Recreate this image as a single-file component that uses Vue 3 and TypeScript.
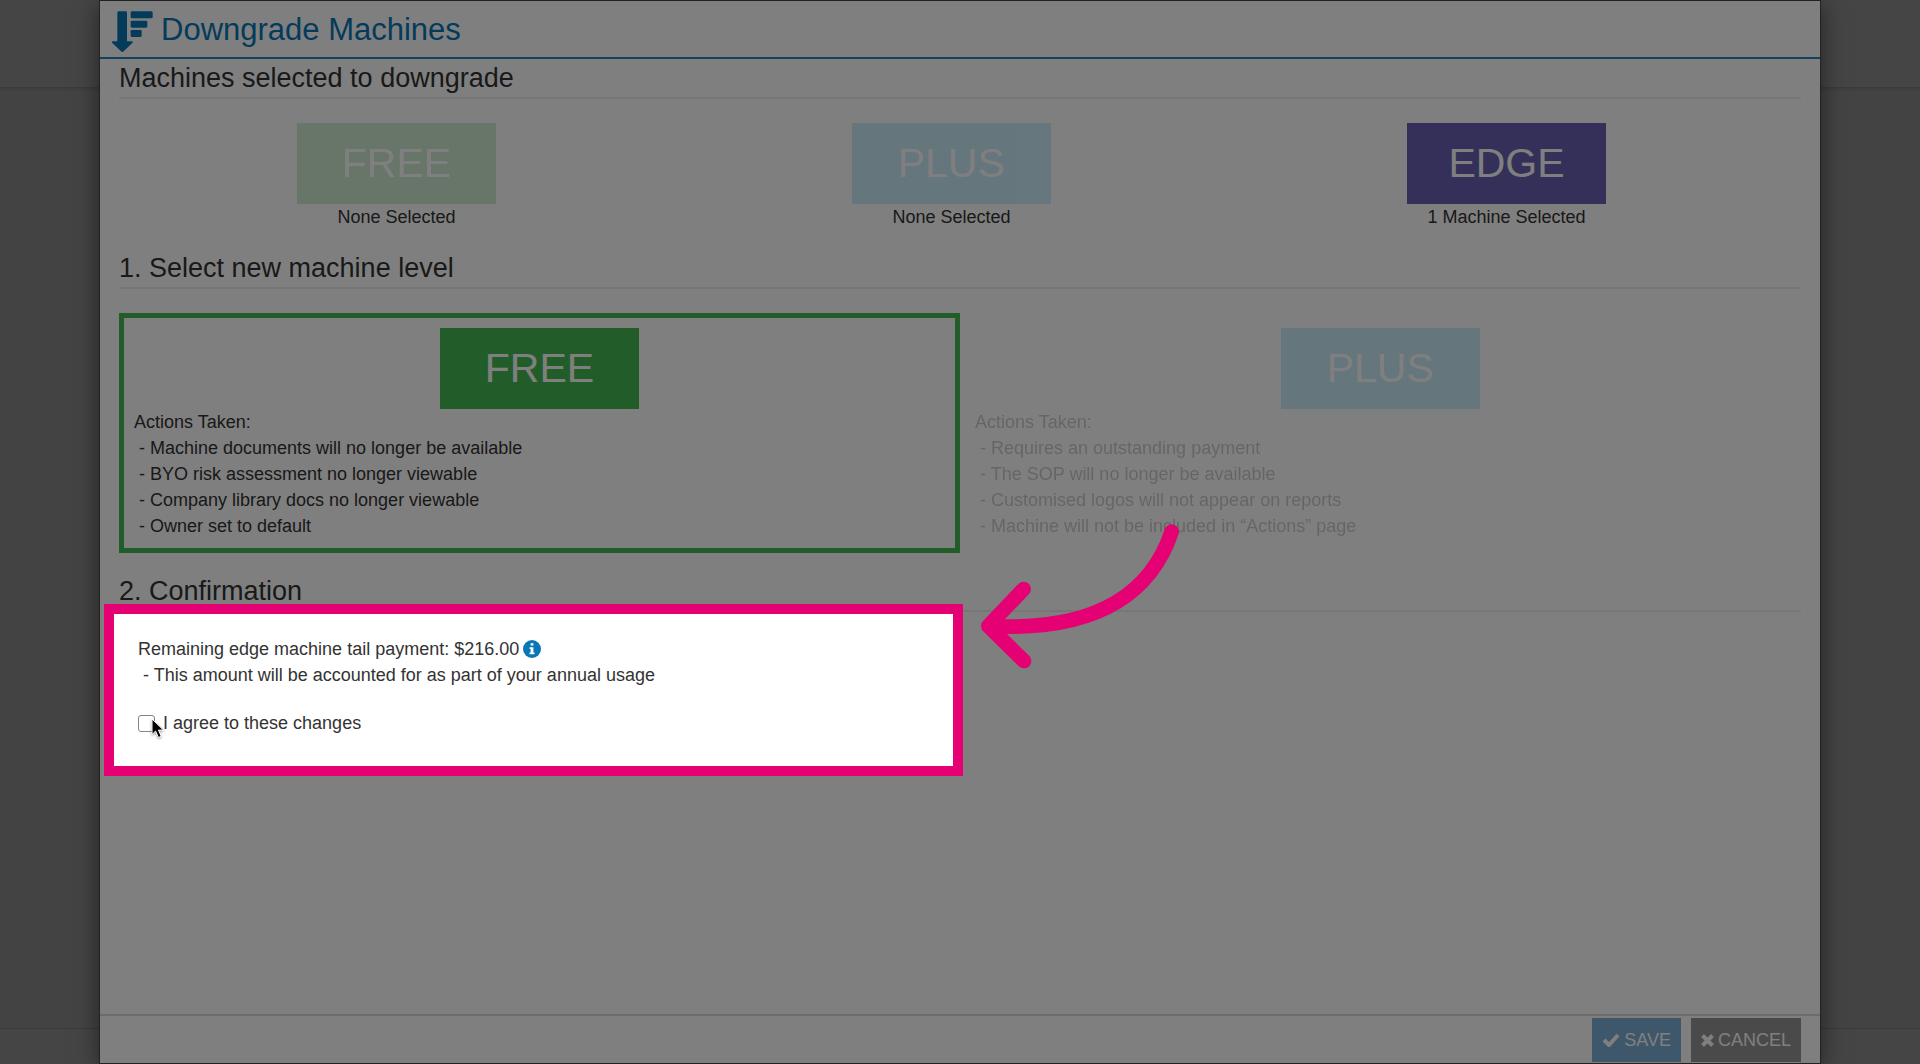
<script setup lang="ts">
import { ref } from 'vue'

interface Tier {
  name: string
  kind: 'free' | 'plus' | 'edge'
  faded: boolean
  label: string
}

interface Level {
  name: string
  kind: 'free' | 'plus'
  available: boolean
  actions: string[]
}

const tiers: Tier[] = [
  { name: 'FREE', kind: 'free', faded: true, label: 'None Selected' },
  { name: 'PLUS', kind: 'plus', faded: true, label: 'None Selected' },
  { name: 'EDGE', kind: 'edge', faded: false, label: '1 Machine Selected' },
]

const levels: Level[] = [
  {
    name: 'FREE',
    kind: 'free',
    available: true,
    actions: [
      'Machine documents will no longer be available',
      'BYO risk assessment no longer viewable',
      'Company library docs no longer viewable',
      'Owner set to default',
    ],
  },
  {
    name: 'PLUS',
    kind: 'plus',
    available: false,
    actions: [
      'Requires an outstanding payment',
      'The SOP will no longer be available',
      'Customised logos will not appear on reports',
      'Machine will not be included in “Actions” page',
    ],
  },
]

const selected = ref('FREE')
const agreed = ref(false)

function choose(level: Level) {
  if (level.available) selected.value = level.name
}
</script>

<template>
  <div class="page">
    <div class="page-top"></div>
    <div class="page-bottom"></div>

    <div class="modal" role="dialog" aria-labelledby="dialog-title">
      <header class="modal-header">
        <svg class="title-icon" viewBox="0 0 123 126" aria-hidden="true">
          <path d="M20 1h21a4 4 0 0 1 4 4v86h14q6 0 2 5L35 121q-4 4-8 0L1 96q-4-5 2-5h13V5a4 4 0 0 1 4-4z" />
          <rect x="56" y="1" width="66" height="21" rx="4" />
          <rect x="56" y="29" width="50" height="21" rx="4" />
          <rect x="56" y="57" width="33" height="21" rx="4" />
        </svg>
        <h1 id="dialog-title">Downgrade Machines</h1>
      </header>

      <main class="modal-body">
        <section>
          <h2>Machines selected to downgrade</h2>
          <div class="tiers">
            <div v-for="tier in tiers" :key="tier.name" class="tier">
              <div class="badge" :class="[tier.kind, { faded: tier.faded }]">{{ tier.name }}</div>
              <div>{{ tier.label }}</div>
            </div>
          </div>
        </section>

        <section>
          <h2>1. Select new machine level</h2>
          <div class="levels">
            <button
              v-for="level in levels"
              :key="level.name"
              type="button"
              class="level"
              :class="{ selected: selected === level.name, faded: !level.available }"
              :disabled="!level.available"
              @click="choose(level)"
            >
              <span class="badge" :class="level.kind">{{ level.name }}</span>
              <span class="line">Actions Taken:</span>
              <span v-for="action in level.actions" :key="action" class="line item">- {{ action }}</span>
            </button>
          </div>
        </section>

        <section class="confirmation">
          <h2>2. Confirmation</h2>
          <div class="payment">
            <div class="amount">
              <span>Remaining edge machine tail payment: $216.00</span>
              <svg class="info" viewBox="0 0 18 18" aria-hidden="true">
                <circle cx="9" cy="9" r="9" fill="#0977b5" />
                <path fill="#fff" d="M7.6 3.2h2.8v2.4H7.6zM6.6 7.2h3.8v5.2h1.1v1.9H6.5v-1.900h1.1V9.1h-1z" />
              </svg>
            </div>
            <div class="item">- This amount will be accounted for as part of your annual usage</div>
            <label class="agree">
              <input v-model="agreed" type="checkbox" />
              <span>I agree to these changes</span>
              <svg class="cursor" viewBox="0 0 14 21" aria-hidden="true">
                <path
                  d="M1 1v15.500l3.600-3.400 2.800 6.400 2.800-1.200-2.700-6.200h5z"
                  fill="#000"
                  stroke="#fff"
                  stroke-width="1"
                />
              </svg>
            </label>
          </div>

          <div class="spotlight"></div>
          <svg class="arrow" viewBox="180 72 600 438" aria-hidden="true">
            <path d="M755 95C700 260 555 398 205 378M311 267L205 378L312 483" />
          </svg>
        </section>
      </main>

      <footer class="modal-footer">
        <button type="button" class="action save">
          <svg width="18" height="14" viewBox="0 0 18 14" aria-hidden="true">
            <path d="M2 7l5 5L16 2" fill="none" stroke="currentColor" stroke-width="4" />
          </svg>
          SAVE
        </button>
        <button type="button" class="action cancel">
          <svg width="13" height="13" viewBox="0 0 13 13" aria-hidden="true">
            <path d="M1.500 1.500l10 10M11.500 1.500l-10 10" fill="none" stroke="currentColor" stroke-width="4" />
          </svg>
          CANCEL
        </button>
      </footer>
    </div>
  </div>
</template>

<style>
body {
  margin: 0;
}
</style>

<style scoped>
.page {
  position: relative;
  overflow: hidden;
  min-height: 100vh;
  background: #878787;
  color: #333;
  font: 18px/26px "Liberation Sans", Arial, sans-serif;
}

.page *,
.page {
  box-sizing: border-box;
}

.page-top {
  position: absolute;
  inset: 0 0 auto;
  height: 87px;
  background: #8a8a8a;
  box-shadow: 0 1px 4px rgba(0, 0, 0, 0.2);
}

.page-bottom {
  position: absolute;
  inset: auto 0 0;
  height: 36px;
  border-top: 1px solid #747474;
  background: #8a8a8a;
}

.modal {
  position: relative;
  display: flex;
  flex-direction: column;
  min-height: 100vh;
  margin: 0 99px;
  border: 1px solid #444;
  background: #fff;
  box-shadow: 0 5px 22px rgba(0, 0, 0, 0.5);
}

.modal-header {
  display: flex;
  gap: 8px;
  padding: 10px 12px 4px;
  border-bottom: 2px solid #1f86bd;
  color: #0977b5;
}

.title-icon {
  width: 41px;
  height: 42px;
  fill: currentColor;
}

h1 {
  margin: 0;
  font-size: 31px;
  font-weight: 400;
  line-height: 38px;
}

.modal-body {
  flex: 1;
  display: flex;
  flex-direction: column;
  gap: 23px;
  padding: 4px 19px;
}

h2 {
  margin: 0 0 24px;
  padding-bottom: 4px;
  border-bottom: 2px solid #eee;
  font-size: 27px;
  font-weight: 400;
  line-height: 30px;
}

.tiers {
  display: flex;
  padding-right: 17px;
}

.tier {
  flex: 1;
  text-align: center;
}

.badge {
  display: block;
  width: 199px;
  margin: 0 auto;
  color: #fff;
  font-size: 41px;
  line-height: 81px;
  text-align: center;
}

.free {
  background: #44ba52;
}

.plus {
  background: #3bbbf3;
}

.edge {
  background: #6a60b4;
}

.faded {
  opacity: 0.25;
}

.levels {
  display: flex;
}

.level {
  flex: 1;
  padding: 10px 10px 9px;
  border: 5px solid transparent;
  background: none;
  color: #333;
  font: inherit;
  text-align: left;
}

.level.selected {
  border-color: #44ba52;
}

.line {
  display: block;
}

.item {
  padding-left: 5px;
}

.confirmation {
  position: relative;
}

.payment {
  padding-left: 19px;
}

.amount {
  display: flex;
  align-items: center;
  gap: 4px;
}

.info {
  width: 18px;
  height: 18px;
}

.agree {
  position: relative;
  display: inline-flex;
  align-items: center;
  gap: 8px;
  margin-top: 22px;
}

.agree input {
  appearance: none;
  width: 17px;
  height: 17px;
  margin: 0;
  border: 1px solid #858585;
  border-radius: 3px;
  background: #fff;
}

.agree input:checked {
  background: #0977b5;
}

.cursor {
  position: absolute;
  left: 13px;
  top: 8px;
  width: 14px;
  height: 21px;
  filter: drop-shadow(0 1px 1px rgba(0, 0, 0, 0.4));
}

/* Everything outside the frame is dimmed by the frame's own spread shadow. */
.spotlight {
  position: absolute;
  left: -15px;
  top: 28px;
  width: calc(50% + 18px);
  height: 172px;
  border: 10px solid #e50073;
  box-shadow: 0 0 0 200vmax rgba(0, 0, 0, 0.5);
  pointer-events: none;
  z-index: 1;
}

.arrow {
  position: absolute;
  left: calc(50% + 20px);
  top: -52px;
  width: 200px;
  height: 146px;
  fill: none;
  stroke: #e50073;
  stroke-width: 44;
  stroke-linecap: round;
  stroke-linejoin: round;
  pointer-events: none;
  z-index: 2;
}

.modal-footer {
  display: flex;
  justify-content: flex-end;
  gap: 10px;
  padding: 2px 19px 1px;
  border-top: 2px solid #d8d8d8;
}

.action {
  display: flex;
  align-items: center;
  gap: 4px;
  height: 44px;
  padding: 0 10px;
  border: 0;
  color: #fff;
  font: inherit;
}

.save {
  background: #7caed6;
}

.cancel {
  background: #949494;
}
</style>
